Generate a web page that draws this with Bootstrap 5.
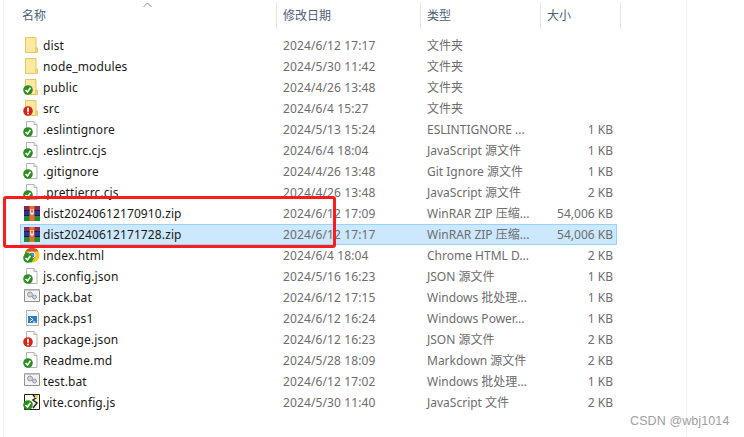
<!DOCTYPE html>
<html lang="zh-CN">
<head>
    <meta charset="UTF-8">
    <meta name="viewport" content="width=device-width, initial-scale=1">
    <title>dist</title>
    <link href="https://cdn.jsdelivr.net/npm/bootstrap@5.3.0/dist/css/bootstrap.min.css" rel="stylesheet">
    <style>
        body { background: #fff; font-family: "Noto Sans", "Noto Sans CJK SC", sans-serif; font-size: 12px; overflow: hidden; }
        .shot { height: 437px; width: 744px; position: relative; padding-left: 3px; }
        .pane { width: 684px; height: 437px; border-left: 1px solid #f2f2f2; border-right: 1px solid #f2f2f2; }
        .heads { height: 35px; padding-left: 16px; align-items: flex-start; padding-top: 2px; color: #4c607a; position: relative; }
        .heads > div { height: 27px; line-height: 27px; border-right: 1px solid #e5e5e5; }
        .heads > .h-name { padding-left: 2px; }
        .heads > div:not(.h-name) { padding-left: 6px; }
        .sort-mark { position: absolute; left: 139px; top: 2px; }
        .h-name { width: 257px; }
        .h-date { width: 144px; }
        .h-type { width: 120px; }
        .h-size { width: 80px; }
        .files { padding-left: 16px; }
        .file-row { display: flex; width: 597px; height: 21px; line-height: 19px; border: 1px solid transparent; color: #6d6d6d; letter-spacing: .12px; }
        .file-row.picked { background: #cce8ff; border-color: #99d1ff; }
        .c-ico { width: 22px; padding-left: 2px; flex: none; display: flex; align-items: center; }
        .c-name { width: 240px; color: #1a1a1a; flex: none; }
        .c-date { width: 144px; flex: none; }
        .c-type { width: 119px; flex: none; white-space: nowrap; letter-spacing: 0; }
        .c-size { width: 67px; text-align: right; flex: none; letter-spacing: 0; }
        .red-box { position: absolute; left: 3px; top: 196px; width: 333px; height: 52px; border: 3px solid #fb1d1d; border-radius: 3px; }
        .mark-csdn { position: absolute; left: 630px; top: 412px; font-size: 12.5px; color: #a0a0a0; font-family: "Liberation Sans", sans-serif; letter-spacing: .1px; }
    </style>
</head>
<body>
<svg width="0" height="0" class="position-absolute">
    <defs>
        <symbol id="folder" viewBox="0 0 16 16">
            <path d="M1.500 .5h10.500v15h-10.500z" fill="#ffe9a0" stroke="#e8c565"/>
            <path d="M12 11h1.500v4.500h-1.500z" fill="#ffe9a0" stroke="#e8c565"/>
        </symbol>
        <symbol id="page" viewBox="0 0 16 16">
            <path d="M2.500 .5h7.500l3 3v12h-10.500z" fill="#fff" stroke="#b5b5b5"/>
            <path d="M10 .5v3h3" fill="#eee" stroke="#b5b5b5"/>
        </symbol>
        <symbol id="ok" viewBox="0 0 10 10">
            <circle cx="5" cy="5" r="4.800" fill="#2a8f20"/>
            <path d="M2.500 5l2 2 3-4.200" fill="none" stroke="#fff" stroke-width="1.600"/>
        </symbol>
        <symbol id="bad" viewBox="0 0 10 10">
            <circle cx="5" cy="5" r="4.800" fill="#d3261a"/>
            <path d="M5 1.800v4M5 6.800v1.400" fill="none" stroke="#fff" stroke-width="1.800"/>
        </symbol>
        <symbol id="rar" viewBox="0 0 16 16">
            <path d="M0 1h16v5h-16z" fill="#8f2456"/>
            <path d="M0 6h16v5h-16z" fill="#27358f"/>
            <path d="M0 11h16v5h-16z" fill="#1f8a3c"/>
            <path d="M0 5.500h16M0 10.500h16" stroke="#1c1c3c"/>
            <path d="M5.500 1h5v15h-5z" fill="#e8702a"/>
            <path d="M6.500 6.500h3v3h-3z" fill="#fff"/>
            <path d="M6.500 4h1v4h-1zM8.500 4h1v4h-1z" fill="#fff"/>
            <path d="M7.500 5h1v3h-1z" fill="#c22"/>
        </symbol>
        <symbol id="bat" viewBox="0 0 16 16">
            <path d="M.5 .5h15v12h-15z" fill="#f4f4f4" stroke="#8f8f8f"/>
            <path d="M.5 .5h15v1.500h-15z" fill="#c8c8c8"/>
            <circle cx="6" cy="5.500" r="2.500" fill="#d4d4d4" stroke="#8a9bb0"/>
            <circle cx="10.500" cy="8" r="2" fill="#d4d4d4" stroke="#8a9bb0"/>
        </symbol>
        <symbol id="ps" viewBox="0 0 16 16">
            <path d="M2.500 .5h10l2 2v13h-12z" fill="#f2f5f9" stroke="#b5b5b5"/>
            <path d="M4 6h9v7h-9z" fill="#2a7fc4"/>
            <path d="M6 7.500l3 2-3 2M9 12h2.500" fill="none" stroke="#fff"/>
        </symbol>
        <symbol id="chrome" viewBox="0 0 16 16">
            <circle cx="8" cy="8" r="7.500" fill="#f2c81e"/>
            <path d="M1.500 4.500a7.500 7.500 0 0 1 13 0h-6.500z" fill="#dc4a38"/>
            <path d="M1.500 4.500a7.500 7.500 0 0 0 6 11l3-5z" fill="#2f9a48"/>
            <circle cx="8" cy="8" r="3" fill="#4a8bf0" stroke="#fff"/>
        </symbol>
        <symbol id="vite" viewBox="0 0 16 16">
            <path d="M.5 .5h15v15h-15z" fill="#f7f7e8" stroke="#222"/>
            <path d="M9 1l3 3-3 2 4 3-4 5" fill="none" stroke="#222" stroke-width="1.500"/>
            <path d="M11 1h3v3h-3z" fill="#f2d43c"/>
        </symbol>
    </defs>
</svg>

<div class="shot">
    <div class="pane">
        <div class="heads d-flex">
            <div class="h-name">名称</div>
            <div class="h-date">修改日期</div>
            <div class="h-type">类型</div>
            <div class="h-size">大小</div>
            <svg class="sort-mark" width="9" height="6" viewBox="0 0 9 6"><path d="M.5 5l4-4 4 4" fill="none" stroke="#8a8a8a"/></svg>
        </div>
        <div class="files" id="files"></div>
    </div>
    <div class="red-box"></div>
    <div class="mark-csdn">CSDN @wbj1014</div>
</div>

<script>
    // 名称, 图标, 角标, 日期, 类型, 大小
    const rows = [
        ['dist', 'folder', '', '2024/6/12 17:17', '文件夹', ''],
        ['node_modules', 'folder', '', '2024/5/30 11:42', '文件夹', ''],
        ['public', 'folder', 'ok', '2024/4/26 13:48', '文件夹', ''],
        ['src', 'folder', 'bad', '2024/6/4 15:27', '文件夹', ''],
        ['.eslintignore', 'page', 'ok', '2024/5/13 15:24', 'ESLINTIGNORE ...', '1 KB'],
        ['.eslintrc.cjs', 'page', 'ok', '2024/6/4 18:04', 'JavaScript 源文件', '1 KB'],
        ['.gitignore', 'page', 'ok', '2024/4/26 13:48', 'Git Ignore 源文件', '1 KB'],
        ['.prettierrc.cjs', 'page', 'ok', '2024/4/26 13:48', 'JavaScript 源文件', '2 KB'],
        ['dist20240612170910.zip', 'rar', '', '2024/6/12 17:09', 'WinRAR ZIP 压缩...', '54,006 KB'],
        ['dist20240612171728.zip', 'rar', '', '2024/6/12 17:17', 'WinRAR ZIP 压缩...', '54,006 KB'],
        ['index.html', 'chrome', 'ok', '2024/6/4 18:04', 'Chrome HTML D...', '2 KB'],
        ['js.config.json', 'page', 'ok', '2024/5/16 16:23', 'JSON 源文件', '1 KB'],
        ['pack.bat', 'bat', '', '2024/6/12 17:15', 'Windows 批处理...', '1 KB'],
        ['pack.ps1', 'ps', '', '2024/6/12 16:24', 'Windows Power...', '1 KB'],
        ['package.json', 'page', 'bad', '2024/6/12 16:23', 'JSON 源文件', '2 KB'],
        ['Readme.md', 'page', 'ok', '2024/5/28 18:09', 'Markdown 源文件', '2 KB'],
        ['test.bat', 'bat', '', '2024/6/12 17:02', 'Windows 批处理...', '1 KB'],
        ['vite.config.js', 'vite', 'ok', '2024/5/30 11:40', 'JavaScript 文件', '2 KB']
    ];

    document.getElementById('files').innerHTML = rows.map(function (r, i) {
        const badge = r[2] ? `<use href="#${r[2]}" x="0" y="6" width="10" height="10"/>` : '';
        return `<div class="file-row${i === 9 ? ' picked' : ''}">
            <div class="c-ico"><svg width="17" height="17" viewBox="0 0 17 17"><use href="#${r[1]}" x="1" y="0" width="16" height="16"/>${badge}</svg></div>
            <div class="c-name">${r[0]}</div>
            <div class="c-date">${r[3]}</div>
            <div class="c-type">${r[4]}</div>
            <div class="c-size">${r[5]}</div>
        </div>`;
    }).join('');
</script>

<script src="https://cdn.jsdelivr.net/npm/bootstrap@5.3.0/dist/js/bootstrap.bundle.min.js"></script>
</body>
</html>
